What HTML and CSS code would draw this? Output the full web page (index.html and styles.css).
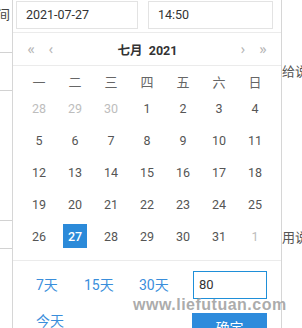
FILE: index.html
```html
<!DOCTYPE html>
<html>
<head>
<meta charset="utf-8">
<link rel="stylesheet" href="styles.css">
</head>
<body>
<div class="page">
  <div class="side-left">
    <div class="cell c1"><span class="clip">间</span></div>
    <div class="cell c2"></div>
    <div class="cell c3"></div>
    <div class="cell c4"></div>
  </div>
  <div class="side-main"></div>
  <div class="side-right">
    <div class="note n1">给说明</div>
    <div class="note n2">用说明</div>
  </div>

  <div class="popover">
    <div class="inputs">
      <div class="field date">2021-07-27</div>
      <div class="field time">14:50</div>
    </div>
    <div class="header">
      <div class="nav"><span>«</span><span>‹</span></div>
      <div class="title">七月&nbsp; 2021</div>
      <div class="nav"><span>›</span><span>»</span></div>
    </div>
    <div class="calendar">
      <div class="wd">一</div><div class="wd">二</div><div class="wd">三</div><div class="wd">四</div><div class="wd">五</div><div class="wd">六</div><div class="wd">日</div>
      <div class="d muted">28</div><div class="d muted">29</div><div class="d muted">30</div><div class="d">1</div><div class="d">2</div><div class="d">3</div><div class="d">4</div>
      <div class="d">5</div><div class="d">6</div><div class="d">7</div><div class="d">8</div><div class="d">9</div><div class="d">10</div><div class="d">11</div>
      <div class="d">12</div><div class="d">13</div><div class="d">14</div><div class="d">15</div><div class="d">16</div><div class="d">17</div><div class="d">18</div>
      <div class="d">19</div><div class="d">20</div><div class="d">21</div><div class="d">22</div><div class="d">23</div><div class="d">24</div><div class="d">25</div>
      <div class="d">26</div><div class="d"><span class="sel">27</span></div><div class="d">28</div><div class="d">29</div><div class="d">30</div><div class="d">31</div><div class="d muted">1</div>
    </div>
    <div class="footer">
      <div class="link">7天</div>
      <div class="link">15天</div>
      <div class="link">30天</div>
      <div class="days-input">80</div>
      <div class="link today">今天</div>
      <div></div>
      <div></div>
      <div class="ok">确定</div>
    </div>
  </div>

  <div class="watermark">www.liefutuan.com</div>
</div>
</body>
</html>
```

FILE: styles.css
```css
html, body {
  margin: 0;
  padding: 0;
  background: #fff;
}
body {
  font-family: Roboto, "Noto Sans CJK SC", sans-serif;
}
.page {
  position: relative;
  width: 302px;
  height: 328px;
  overflow: hidden;
  display: flex;
  background: #fff;
}
.side-left {
  width: 12px;
  flex: none;
}
.cell {
  box-sizing: border-box;
  border-bottom: 1px solid #d2d2d2;
  overflow: hidden;
  position: relative;
}
.c1 { height: 53px; }
.c2 { height: 38px; }
.c3 { height: 130px; }
.c4 { height: 28px; }
.clip {
  display: block;
  margin-left: -3px;
  margin-top: 6px;
  font-family: "Noto Sans CJK SC", sans-serif;
  font-size: 13px;
  line-height: 15px;
  color: #444;
}
.side-main {
  flex: 1;
}
.side-right {
  width: 20px;
  flex: none;
  overflow: hidden;
  font-family: "Noto Sans CJK SC", sans-serif;
  font-size: 13px;
  color: #555;
  white-space: nowrap;
}
.note {
  line-height: 14px;
}
.n1 { margin-top: 64px; }
.n2 { margin-top: 152px; }

.popover {
  position: absolute;
  left: 12px;
  top: -3px;
  width: 270px;
  box-sizing: border-box;
  border: 1px solid #d6d6d6;
  background: #fff;
}
.inputs {
  display: flex;
  gap: 10px;
  padding: 3px 0 3px 3px;
  border-bottom: 1px solid #ebebeb;
}
.field {
  box-sizing: border-box;
  height: 28px;
  border: 1px solid #e3e3e3;
  font-size: 12.5px;
  line-height: 26px;
  color: #333;
  padding-left: 9px;
}
.date { width: 122px; }
.time { width: 125px; }

.header {
  height: 32px;
  display: flex;
  align-items: center;
  justify-content: space-between;
  padding: 0 8px;
  border-bottom: 1px solid #ebebeb;
}
.nav {
  display: flex;
}
.nav span {
  width: 20px;
  text-align: center;
  font-family: "Noto Sans", sans-serif;
  font-size: 14px;
  color: #b5b5b5;
  line-height: 20px;
}
.title {
  font-family: Roboto, "Noto Sans CJK SC", sans-serif;
  font-weight: bold;
  font-size: 12.5px;
  color: #333;
  margin-left: 1px;
}
.calendar {
  display: grid;
  grid-template-columns: repeat(7, 36px);
  grid-auto-rows: 32px;
  grid-template-rows: 22px;
  padding: 4px 8px 8px;
  border-bottom: 1px solid #ebebeb;
}
.wd {
  display: flex;
  align-items: center;
  justify-content: center;
  font-family: "Noto Sans CJK SC", sans-serif;
  font-size: 13px;
  color: #666;
}
.d {
  display: flex;
  align-items: center;
  justify-content: center;
  font-size: 12.5px;
  color: #555;
}
.d.muted {
  color: #bdbdbd;
}
.sel {
  width: 24px;
  height: 24px;
  display: flex;
  align-items: center;
  justify-content: center;
  background: #2b8ad9;
  color: #fff;
  font-weight: 500;
}
.footer {
  display: grid;
  grid-template-columns: 48px 55px 54px 74px;
  grid-template-rows: 28px 28px;
  row-gap: 14px;
  padding: 10px 0 0 23px;
}
.link {
  font-family: Roboto, "Noto Sans CJK SC", sans-serif;
  font-size: 14px;
  line-height: 28px;
  color: #3a8edb;
}
.today {
  line-height: 16px;
}
.days-input {
  box-sizing: border-box;
  height: 28px;
  border: 1px solid #1f8fd8;
  padding-left: 5px;
  font-size: 13px;
  line-height: 26px;
  color: #333;
}
.ok {
  box-sizing: border-box;
  height: 28px;
  background: #2d8bdc;
  color: #fff;
  font-family: "Noto Sans CJK SC", sans-serif;
  font-size: 14px;
  line-height: 28px;
  text-align: center;
  margin-left: -1px;
}
.watermark {
  position: absolute;
  left: 133px;
  top: 296px;
  font-family: "Liberation Sans", sans-serif;
  font-weight: bold;
  font-size: 16px;
  letter-spacing: 0.5px;
  line-height: 18px;
  color: rgba(150, 150, 150, 0.8);
  white-space: nowrap;
}
```
